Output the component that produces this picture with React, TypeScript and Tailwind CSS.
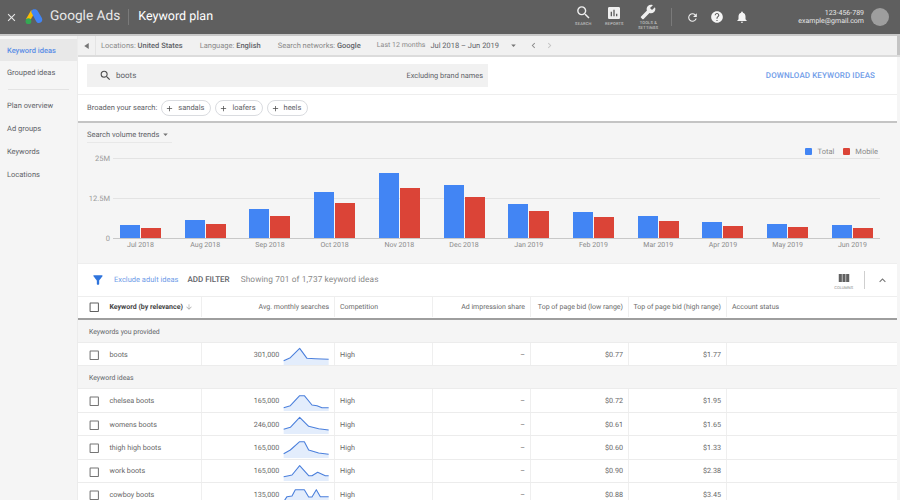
import React from "react";
import {
  MdClose, MdSearch, MdAssessment, MdBuild, MdRefresh, MdHelp, MdNotifications, MdViewColumn,
  MdFilterAlt, MdCheckBoxOutlineBlank, MdExpandLess, MdArrowDropDown, MdChevronLeft, MdChevronRight,
  MdAdd, MdArrowDownward,
} from "react-icons/md";

const months = ["Jul 2018","Aug 2018","Sep 2018","Oct 2018","Nov 2018","Dec 2018","Jan 2019","Feb 2019","Mar 2019","Apr 2019","May 2019","Jun 2019"];
const blue = [13,18,29,46,65,53,34,26,22,16,14,13];
const red = [10,14,22,35,50,41,27,21,17,12,11,10];

const cols = ["w-[124px]","w-[133px]","w-[98px]","w-[98px]","w-[98px]","w-[98px]","w-[170px]"];

type Row = { k: string; v: string; s: number[][]; low: string; high: string };
const provided: Row = { k: "boots", v: "301,000", low: "$0.77", high: "$1.77",
  s: [[2,53],[22,44],[50,16],[72,46],[97,47],[137,49]] };
const ideas: Row[] = [
  { k: "chelsea boots", v: "165,000", low: "$0.72", high: "$1.95", s: [[2,56],[22,50],[50,20],[64,20],[87,48],[102,50],[117,56],[137,56]] },
  { k: "womens boots", v: "246,000", low: "$0.61", high: "$1.65", s: [[2,52],[22,46],[50,16],[77,43],[107,50],[137,54]] },
  { k: "thigh high boots", v: "165,000", low: "$0.60", high: "$1.33", s: [[2,53],[22,42],[50,17],[64,17],[77,42],[107,51],[137,55]] },
  { k: "work boots", v: "165,000", low: "$0.90", high: "$2.38", s: [[2,53],[17,50],[27,48],[50,20],[77,50],[87,50],[104,40],[127,50],[137,50]] },
  { k: "cowboy boots", v: "135,000", low: "$0.88", high: "$3.45", s: [[4,53],[12,41],[27,39],[37,20],[64,20],[77,42],[87,42],[100,20],[112,41],[137,41]] },
];

function Spark({ s }: { s: number[][] }) {
  const line = s.map((p) => p.join(",")).join(" ");
  const last = s[s.length - 1];
  const area = `${s[0][0]},66 ${line} ${last[0]},66`;
  return (
    <svg viewBox="0 0 140 69" className="w-[46.67px] h-[23px] shrink-0">
      <polygon points={area} fill="#e3edfc" />
      <polyline points={line} fill="none" stroke="#4a7fdc" strokeWidth="3.2" strokeLinejoin="round" />
    </svg>
  );
}

function TableRow({ r }: { r: Row }) {
  return (
    <div className="flex w-[819px] h-[23.4px] shrink-0 bg-white border-b border-[#ececec] text-[7.2px] text-[#666666]">
      <div className={`${cols[0]} flex items-center pt-[2px] border-r border-[#efefef]`}>
        <MdCheckBoxOutlineBlank className="ml-[10px] w-[12.5px] h-[12.5px] text-[#757575]" />
        <span className="ml-[9px] whitespace-nowrap">{r.k}</span>
      </div>
      <div className={`${cols[1]} flex items-center justify-end pr-[4px] border-r border-[#efefef]`}>
        <span className="mr-[4px] pt-[2px]">{r.v}</span>
        <Spark s={r.s} />
      </div>
      <div className={`${cols[2]} flex items-center pt-[2px] pl-[5px] border-r border-[#efefef]`}>High</div>
      <div className={`${cols[3]} flex items-center justify-end pt-[2px] pr-[5px] border-r border-[#efefef]`}>–</div>
      <div className={`${cols[4]} flex items-center justify-end pt-[2px] pr-[5px] border-r border-[#efefef]`}>{r.low}</div>
      <div className={`${cols[5]} flex items-center justify-end pt-[2px] pr-[5px] border-r border-[#efefef]`}>{r.high}</div>
      <div className={cols[6]} />
    </div>
  );
}

function Group({ label }: { label: string }) {
  return (
    <div className="w-[819px] h-[23px] shrink-0 flex items-center pt-[2px] pl-[11px] bg-[#f5f5f5] border-b border-[#ececec] text-[6.9px] text-[#5f6368]">
      {label}
    </div>
  );
}

export default function App() {
  return (
    <div className="w-[900px] h-[500px] overflow-hidden flex flex-col bg-white opacity-[0.999] font-['Roboto',sans-serif] text-[#5f6368] [text-rendering:geometricPrecision]">
      {/* Header */}
      <header className="h-[36px] shrink-0 flex items-center bg-[#5f5f5f] border-b-2 border-[#c8c8c8] text-white">
        <MdClose className="ml-[5px] w-[13px] h-[13px] text-[#e8e8e8]" />
        <svg viewBox="0 0 20 20" className="ml-[6px] w-[19px] h-[18px]">
          <path d="M7.3 2.6 L1.6 12.6 L5.6 15 L11.4 5 Z" fill="#fbbc04" />
          <path d="M12.8 1.8 C11 1 9 1.6 8 3 L7.3 4.2 L12.9 14.6 C13.9 16.6 16.2 17.2 17.9 16.2 C19.8 15.2 20.2 13 19.3 11.2 L14.6 3 C14.1 2.4 13.5 2 12.8 1.8 Z" fill="#4285f4" />
          <circle cx="4.4" cy="14.6" r="3.2" fill="#34a853" />
        </svg>
        <span className="ml-[7px] text-[13.7px] text-[#e8e8e8] leading-none">Google Ads</span>
        <div className="ml-[8px] w-px h-[16px] bg-[#7a7a7a]" />
        <span className="ml-[9px] text-[12.5px] text-white leading-none">Keyword plan</span>
        <div className="flex-1" />
        <div className="flex flex-col items-center w-[20px] mr-[9px] -mt-[4px]">
          <MdSearch className="w-[17px] h-[17px] text-[#efefef]" />
          <span className="text-[4px] leading-[5px] tracking-[0.2px] text-[#dddddd]">SEARCH</span>
        </div>
        <div className="flex flex-col items-center w-[24px] mr-[9px] -mt-[4px]">
          <MdAssessment className="w-[16px] h-[16px] text-[#efefef]" />
          <span className="text-[4px] leading-[5px] tracking-[0.2px] text-[#dddddd]">REPORTS</span>
        </div>
        <div className="flex flex-col items-center w-[26px] mr-[10px] -mt-[1px]">
          <MdBuild className="w-[16px] h-[16px] text-[#efefef] -scale-x-100" />
          <span className="text-[4px] leading-[5px] tracking-[0.2px] text-[#dddddd] text-center">TOOLS &amp;<br />SETTINGS</span>
        </div>
        <div className="w-px h-[18px] bg-[#7a7a7a] mr-[14px]" />
        <MdRefresh className="w-[13px] h-[13px] text-[#efefef] mr-[11px]" />
        <MdHelp className="w-[14px] h-[14px] text-[#f5f5f5] mr-[11px]" />
        <MdNotifications className="w-[14px] h-[14px] text-[#f5f5f5]" />
        <div className="ml-[49px] mr-[11px] flex items-center">
          <div className="text-right text-[7px] leading-[8px] text-[#e8e8e8]">
            <div>123-456-789</div>
            <div>example@gmail.com</div>
          </div>
          <div className="ml-[7px] w-[18px] h-[18px] rounded-full bg-[#9e9e9e]" />
        </div>
      </header>

      <div className="flex-1 flex min-h-0">
        {/* Sidebar */}
        <aside className="w-[78px] shrink-0 bg-[#f5f5f5] border-r border-[#ececec] pt-[3px] text-[7.5px] text-[#5f6368]">
          <div className="h-[22px] flex items-center pt-[1px] pl-[7px] bg-[#e8e8e8] text-[#5b8ee6] font-medium">Keyword ideas</div>
          <div className="h-[23px] flex items-center pt-[1px] pl-[7px]">Grouped ideas</div>
          <div className="mx-[8px] mt-[5px] mb-[4px] h-px bg-[#e3e3e3]" />
          <div className="h-[23px] flex items-center pl-[7px]">Plan overview</div>
          <div className="h-[23px] flex items-center pl-[7px]">Ad groups</div>
          <div className="h-[23px] flex items-center pl-[7px]">Keywords</div>
          <div className="h-[23px] flex items-center pl-[7px]">Locations</div>
        </aside>

        <main className="flex-1 min-w-0 flex flex-col bg-[#f5f5f5]">
          {/* Filter strip */}
          <div className="h-[21px] shrink-0 flex items-center bg-[#f1f1f1] border-b-2 border-[#dcdcdc] text-[7.5px] text-[#8a8a8a]">
            <div className="w-[18px] h-full flex items-center justify-center border-r border-[#e4e4e4]">
              <svg viewBox="0 0 6 8" className="w-[5px] h-[6px]"><path d="M6 0 L0 4 L6 8 Z" fill="#757575" /></svg>
            </div>
            <span className="ml-[5px]">Locations: <b className="font-medium text-[#5f6368]">United States</b></span>
            <span className="ml-[17px]">Language: <b className="font-medium text-[#5f6368]">English</b></span>
            <span className="ml-[17px]">Search networks: <b className="font-medium text-[#5f6368]">Google</b></span>
            <span className="ml-[16px] text-[7px]">Last 12 months</span>
            <span className="ml-[5px] text-[#5f6368] text-[7.5px]">Jul 2018 – Jun 2019</span>
            <MdArrowDropDown className="ml-[9px] w-[11px] h-[11px] text-[#757575]" />
            <MdChevronLeft className="ml-[9px] w-[11px] h-[11px] text-[#8a8a8a]" />
            <MdChevronRight className="ml-[5px] w-[11px] h-[11px] text-[#c4c4c4]" />
            <div className="ml-auto w-[3px] h-full bg-[#c4c4c4]" />
          </div>

          {/* Search row */}
          <div className="w-[819px] h-[38px] shrink-0 flex items-center justify-between pl-[9px] pr-[22px] bg-white border-b border-[#eeeeee]">
            <div className="w-[401px] h-[23px] flex items-center bg-[#f1f1f1] text-[8px] text-[#5f6368]">
              <MdSearch className="ml-[12px] w-[13px] h-[13px] text-[#4d4d4d]" />
              <span className="ml-[4px]">boots</span>
              <span className="ml-auto mr-[5px] text-[7.4px]">Excluding brand names</span>
            </div>
            <span className="text-[8px] font-medium tracking-[0.1px] text-[#6f9ce8]">DOWNLOAD KEYWORD IDEAS</span>
          </div>

          {/* Broaden row */}
          <div className="w-[819px] h-[28px] shrink-0 flex items-center pl-[9px] bg-white border-b-2 border-[#c4c4c4] text-[7.5px] text-[#5f6368]">
            <span>Broaden your search:</span>
            {["sandals", "loafers", "heels"].map((t) => (
              <span key={t} className="ml-[4px] first-of-type:ml-[7px] h-[16px] flex items-center rounded-full border border-[#dadce0] pl-[3px] pr-[6px] bg-white">
                <MdAdd className="w-[9px] h-[9px] text-[#4d4d4d]" />
                <span className="ml-[4px]">{t}</span>
              </span>
            ))}
          </div>

          {/* Chart */}
          <section className="h-[140px] shrink-0 bg-[#f5f5f5] flex flex-col relative">
            <div className="h-[16px] mt-[4px] ml-[9px] w-[85px] flex items-center text-[7.5px] text-[#5f6368] border-b border-[#e8e8e8] whitespace-nowrap">
              <span>Search volume trends</span>
              <MdArrowDropDown className="ml-[1px] w-[11px] h-[11px] shrink-0 text-[#757575]" />
            </div>
            <div className="absolute top-[23px] right-[22px] flex items-center text-[7.5px] text-[#8a8a8a]">
              <span className="w-[7px] h-[7px] bg-[#4285f4] rounded-[1px]" />
              <span className="ml-[6px]">Total</span>
              <span className="ml-[9px] w-[7px] h-[7px] bg-[#db4437] rounded-[1px]" />
              <span className="ml-[5px]">Mobile</span>
            </div>
            <div className="flex h-[81px] mt-[15px]">
              <div className="w-[32px] relative text-[7.5px] text-[#9a9a9a] shrink-0">
                <span className="absolute right-0 -top-[5px]">25M</span>
                <span className="absolute right-0 top-[35px]">12.5M</span>
                <span className="absolute right-0 top-[75px]">0</span>
              </div>
              <div className="ml-[3px] w-[767px] relative border-b border-[#c8c8c8] flex items-end justify-between px-[7px]">
                <div className="absolute left-0 right-0 top-0 h-px bg-[#e3e3e3]" />
                <div className="absolute left-0 right-0 top-[40px] h-px bg-[#e3e3e3]" />
                {months.map((m, i) => (
                  <div key={m} className="relative w-[41px] flex items-end justify-between">
                    <div className="w-[20px] bg-[#4285f4]" style={{ height: blue[i] }} />
                    <div className="w-[20px] bg-[#db4437]" style={{ height: red[i] }} />
                  </div>
                ))}
              </div>
            </div>
            <div className="ml-[35px] w-[767px] flex justify-between px-[7px] mt-[1px]">
              {months.map((m) => (
                <span key={m} className="w-[41px] text-center text-[7px] whitespace-nowrap text-[#8a8a8a]">{m}</span>
              ))}
            </div>
          </section>

          {/* Toolbar */}
          <div className="w-[819px] h-[33px] shrink-0 flex items-center bg-white border-t border-[#eeeeee] text-[#5f6368]">
            <MdFilterAlt className="ml-[13px] w-[14px] h-[14px] text-[#2f74dc]" />
            <span className="ml-[9px] text-[7.5px] text-[#6f9ce8]">Exclude adult ideas</span>
            <span className="ml-[9px] text-[8px] font-medium">ADD FILTER</span>
            <span className="ml-[11px] text-[8.3px] tracking-[0.1px] text-[#8a8a8a]">Showing 701 of 1,737 keyword ideas</span>
            <div className="flex-1" />
            <div className="flex flex-col items-center mr-[11px]">
              <MdViewColumn className="w-[14px] h-[14px] text-[#616161]" />
              <span className="text-[4px] leading-[5px] text-[#8a8a8a]">COLUMNS</span>
            </div>
            <div className="w-px h-[18px] bg-[#cfcfcf]" />
            <MdExpandLess className="ml-[11px] mr-[8px] w-[13px] h-[13px] text-[#757575]" />
          </div>

          {/* Table */}
          <div className="flex-1 min-h-0 flex flex-col overflow-hidden">
            <div className="flex w-[819px] h-[24px] shrink-0 pb-[1px] bg-white border-t border-[#eeeeee] border-b-2 border-b-[#9e9e9e] text-[7px] text-[#6b6b6b] whitespace-nowrap">
              <div className={`${cols[0]} flex items-center border-r border-[#efefef]`}>
                <MdCheckBoxOutlineBlank className="ml-[10px] w-[12.5px] h-[12.5px] text-[#616161]" />
                <span className="ml-[9px] font-bold text-[#444444]">Keyword (by relevance)</span>
                <MdArrowDownward className="ml-[2px] w-[8px] h-[8px] text-[#aaaaaa] shrink-0" />
              </div>
              <div className={`${cols[1]} flex items-center justify-end pr-[5px] border-r border-[#efefef]`}>Avg. monthly searches</div>
              <div className={`${cols[2]} flex items-center pl-[5px] border-r border-[#efefef]`}>Competition</div>
              <div className={`${cols[3]} flex items-center justify-end pr-[5px] border-r border-[#efefef]`}>Ad impression share</div>
              <div className={`${cols[4]} flex items-center justify-end pr-[5px] border-r border-[#efefef]`}>Top of page bid (low range)</div>
              <div className={`${cols[5]} flex items-center justify-end pr-[5px] border-r border-[#efefef]`}>Top of page bid (high range)</div>
              <div className={`${cols[6]} flex items-center pl-[5px]`}>Account status</div>
            </div>
            <Group label="Keywords you provided" />
            <TableRow r={provided} />
            <Group label="Keyword ideas" />
            {ideas.map((r) => (
              <TableRow key={r.k} r={r} />
            ))}
          </div>
        </main>
      </div>
    </div>
  );
}
